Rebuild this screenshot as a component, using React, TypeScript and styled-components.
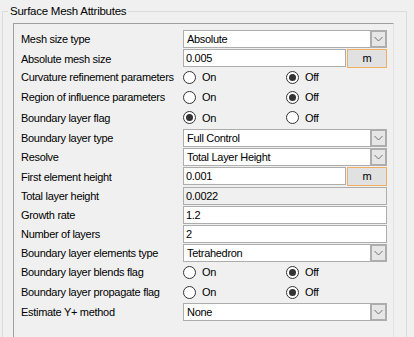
import React from "react";
import styled, { createGlobalStyle } from "styled-components";

const Global = createGlobalStyle`
  html, body { margin: 0; padding: 0; background: #f0f0f0; }
  body { font-family: "Liberation Sans", Arial, sans-serif; font-size: 11px; color: #000; }
`;

const Page = styled.div`
  height: 337px;
  overflow: hidden;
  padding-top: 4px;
  box-sizing: border-box;
`;

const Group = styled.fieldset`
  box-sizing: border-box;
  margin: 0 0 0 2px;
  padding: 0;
  width: 405px;
  height: 400px;
  border: 1px solid #dcdcdc;
  min-inline-size: 0;
`;

const Legend = styled.legend`
  margin-left: 5px;
  padding: 0 2px;
  font-size: 11.5px;
  line-height: 14px;
  letter-spacing: -0.25px;
`;

const Panel = styled.div`
  box-sizing: border-box;
  margin: 5px 0 0 10px;
  width: 381px;
  height: 340px;
  padding: 5px 6px 0 7px;
  border-top: 1px solid #a0a0a0;
  border-left: 1px solid #a0a0a0;
  border-right: 1px solid #e3e3e3;
  display: flex;
  flex-direction: column;
`;

const Row = styled.div<{ $h: number; $ctrl?: boolean }>`
  height: ${(p) => p.$h}px;
  display: grid;
  grid-template-columns: 162px 204px;
  align-items: ${(p) => (p.$ctrl ? "start" : "center")};
  padding-top: ${(p) => (p.$ctrl ? 1 : 0)}px;
  box-sizing: border-box;
`;

const Label = styled.div`
  height: 18px;
  line-height: 18px;
  letter-spacing: -0.3px;
  white-space: nowrap;
  align-self: center;
`;

const Select = styled.div`
  box-sizing: border-box;
  height: 18px;
  border: 1px solid #adadad;
  background: #fff;
  display: flex;
  align-items: stretch;
`;

const SelectText = styled.div`
  flex: 1;
  padding-left: 3px;
  line-height: 16px;
  letter-spacing: -0.3px;
  white-space: nowrap;
`;

const DropButton = styled.div`
  box-sizing: border-box;
  width: 17px;
  margin: -1px -1px -1px 0;
  border: 2px solid #adadad;
  background: #e6e6e6;
  display: flex;
  align-items: center;
  justify-content: center;
`;

const Input = styled.div<{ $readonly?: boolean }>`
  box-sizing: border-box;
  height: 18px;
  border: 1px solid #adadad;
  background: ${(p) => (p.$readonly ? "#f0f0f0" : "#fff")};
  padding-left: 2px;
  line-height: 16px;
  letter-spacing: -0.3px;
  flex: 1;
`;

const InputWithUnit = styled.div`
  display: flex;
  gap: 1px;
`;

const UnitButton = styled.div`
  box-sizing: border-box;
  width: 40px;
  height: 19px;
  border: 1px solid #f0ae62;
  background: #e1e1e1;
  text-align: center;
  line-height: 17px;
`;

const RadioGroup = styled.div`
  display: grid;
  grid-template-columns: 103px 101px;
`;

const RadioOption = styled.div`
  display: flex;
  align-items: center;
  gap: 6px;
  letter-spacing: -0.3px;
`;

const RadioCircle = styled.span<{ $on: boolean }>`
  box-sizing: border-box;
  width: 13px;
  height: 13px;
  border-radius: 50%;
  border: 1px solid #333;
  background: #fff;
  display: flex;
  align-items: center;
  justify-content: center;
  &::after {
    content: "";
    width: 7px;
    height: 7px;
    border-radius: 50%;
    background: ${(p) => (p.$on ? "#333" : "transparent")};
  }
`;

const Chevron = () => (
  <svg width="9" height="6" viewBox="0 0 9 6">
    <polyline points="0.5,1 4.5,5 8.5,1" fill="none" stroke="#707070" strokeWidth="1" />
  </svg>
);

const SelectBox = ({ value }: { value: string }) => (
  <Select>
    <SelectText>{value}</SelectText>
    <DropButton>
      <Chevron />
    </DropButton>
  </Select>
);

const Radios = ({ on }: { on: boolean }) => (
  <RadioGroup>
    <RadioOption>
      <RadioCircle $on={on} />
      On
    </RadioOption>
    <RadioOption>
      <RadioCircle $on={!on} />
      Off
    </RadioOption>
  </RadioGroup>
);

type Item =
  | { kind: "select"; label: string; value: string; h: number }
  | { kind: "input"; label: string; value: string; h: number; unit?: boolean; readonly?: boolean }
  | { kind: "radio"; label: string; on: boolean; h: number };

const items: Item[] = [
  { kind: "select", label: "Mesh size type", value: "Absolute", h: 19 },
  { kind: "input", label: "Absolute mesh size", value: "0.005", unit: true, h: 19 },
  { kind: "radio", label: "Curvature refinement parameters", on: false, h: 20 },
  { kind: "radio", label: "Region of influence parameters", on: false, h: 20 },
  { kind: "radio", label: "Boundary layer flag", on: true, h: 21 },
  { kind: "select", label: "Boundary layer type", value: "Full Control", h: 19 },
  { kind: "select", label: "Resolve", value: "Total Layer Height", h: 19 },
  { kind: "input", label: "First element height", value: "0.001", unit: true, h: 20 },
  { kind: "input", label: "Total layer height", value: "0.0022", readonly: true, h: 19 },
  { kind: "input", label: "Growth rate", value: "1.2", h: 19 },
  { kind: "input", label: "Number of layers", value: "2", h: 19 },
  { kind: "select", label: "Boundary layer elements type", value: "Tetrahedron", h: 19 },
  { kind: "radio", label: "Boundary layer blends flag", on: false, h: 20 },
  { kind: "radio", label: "Boundary layer propagate flag", on: false, h: 20 },
  { kind: "select", label: "Estimate Y+ method", value: "None", h: 19 },
];

export default function App() {
  return (
    <>
      <Global />
      <Page>
        <Group>
          <Legend>Surface Mesh Attributes</Legend>
          <Panel>
            {items.map((it) => (
              <Row key={it.label} $h={it.h} $ctrl={it.kind !== "radio"}>
                <Label>{it.label}</Label>
                {it.kind === "select" && <SelectBox value={it.value} />}
                {it.kind === "input" &&
                  (it.unit ? (
                    <InputWithUnit>
                      <Input>{it.value}</Input>
                      <UnitButton>m</UnitButton>
                    </InputWithUnit>
                  ) : (
                    <Input $readonly={it.readonly}>{it.value}</Input>
                  ))}
                {it.kind === "radio" && <Radios on={it.on} />}
              </Row>
            ))}
          </Panel>
        </Group>
      </Page>
    </>
  );
}
